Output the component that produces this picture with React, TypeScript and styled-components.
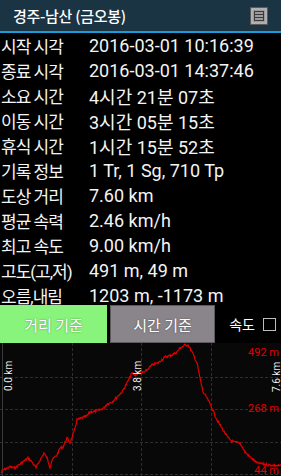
import React from 'react';
import styled, { createGlobalStyle } from 'styled-components';

const GlobalStyle = createGlobalStyle`
  html, body {
    margin: 0;
    padding: 0;
    background: #000;
  }
  body {
    font-family: Roboto, "Noto Sans CJK KR", sans-serif;
    color: #fff;
  }
`;

const rows: [string, string][] = [
  ['시작 시각', '2016-03-01 10:16:39'],
  ['종료 시각', '2016-03-01 14:37:46'],
  ['소요 시간', '4시간 21분 07초'],
  ['이동 시간', '3시간 05분 15초'],
  ['휴식 시간', '1시간 15분 52초'],
  ['기록 정보', '1 Tr, 1 Sg, 710 Tp'],
  ['도상 거리', '7.60 km'],
  ['평균 속력', '2.46 km/h'],
  ['최고 속도', '9.00 km/h'],
  ['고도(고,저)', '491 m, 49 m'],
  ['오름,내림', '1203 m, -1173 m'],
];

// rough shape of the elevation profile, jagged up by a fixed noise
const keyPoints: [number, number][] = [
  [1, 473], [3, 470], [10, 467], [15, 468], [20, 464], [28, 458], [32, 462],
  [36, 468], [40, 460], [44, 453], [47, 458], [50, 467], [52, 460], [57, 455],
  [60, 448], [63, 447], [67, 438], [70, 443], [74, 432], [77, 420], [82, 418],
  [87, 416], [90, 412], [97, 411], [104, 408], [107, 404], [112, 402], [117, 397],
  [122, 392], [127, 383], [130, 377], [132, 373], [135, 375], [138, 373],
  [140, 373], [145, 372], [152, 365], [158, 363], [165, 357], [172, 355],
  [177, 352], [180, 348], [185, 345], [188, 345], [192, 352], [197, 363],
  [200, 378], [203, 392], [207, 398], [212, 408], [217, 420], [223, 430],
  [228, 438], [233, 442], [240, 443], [245, 452], [250, 457], [257, 463],
  [263, 464], [270, 465], [281, 466],
];

const buildProfile = () => {
  const pts: string[] = [];
  let seed = 7;
  const rnd = () => {
    seed = (seed * 9301 + 49297) % 233280;
    return seed / 233280;
  };
  for (let i = 0; i < keyPoints.length - 1; i++) {
    const [x0, y0] = keyPoints[i];
    const [x1, y1] = keyPoints[i + 1];
    const steps = Math.max(1, Math.round((x1 - x0) * 1.5));
    for (let s = 0; s < steps; s++) {
      const t = s / steps;
      const x = x0 + (x1 - x0) * t;
      const y = y0 + (y1 - y0) * t + (rnd() - 0.5) * 2.4;
      pts.push(`${x.toFixed(1)},${(y - 343).toFixed(1)}`);
    }
  }
  const last = keyPoints[keyPoints.length - 1];
  pts.push(`${last[0]},${last[1] - 343}`);
  return pts.join(' ');
};

const profile = buildProfile();

const App = () => (
  <>
    <GlobalStyle />
    <Screen>
      <TitleBar>
        <Title>경주-남산 (금오봉)</Title>
        <MenuIcon>
          <svg width="18" height="18" viewBox="0 0 18 18">
            <rect x="0.5" y="0.5" width="17" height="17" fill="#9c9a9c" stroke="#5a5a5a" />
            <rect x="2" y="2" width="14" height="14" fill="none" stroke="#c4c2c4" strokeWidth="1" />
            <rect x="4.5" y="4.5" width="9" height="9" fill="none" stroke="#3a3a3a" strokeWidth="1" />
            <line x1="4.5" y1="7.5" x2="13.5" y2="7.5" stroke="#3a3a3a" />
            <line x1="4.5" y1="10.5" x2="13.5" y2="10.5" stroke="#3a3a3a" />
          </svg>
        </MenuIcon>
      </TitleBar>
      <Info>
        {rows.map(([label, value]) => (
          <Row key={label}>
            <Label>{label}</Label>
            <Value>{value}</Value>
          </Row>
        ))}
      </Info>
      <ButtonBar>
        <ModeButton $active>거리 기준</ModeButton>
        <ModeButton>시간 기준</ModeButton>
        <SpeedToggle>
          속도
          <CheckBox />
        </SpeedToggle>
      </ButtonBar>
      <Chart>
        <svg width="281" height="133" viewBox="0 0 281 133">
          <rect x="0" y="0" width="281" height="133" fill="#080808" />
          {[2, 72, 141, 211].map(x => (
            <line key={x} x1={x + 0.5} y1="0" x2={x + 0.5} y2="133" stroke="#2e2e2e" strokeDasharray="3 2" />
          ))}
          {[34, 66, 99, 131].map(y => (
            <line key={y} x1="0" y1={y + 0.5} x2="281" y2={y + 0.5} stroke="#2e2e2e" strokeDasharray="3 2" />
          ))}
          <line x1="2.5" y1="0" x2="2.5" y2="133" stroke="#3a3a3a" />
          <polyline points={profile} fill="none" stroke="#e00000" strokeWidth="1.2" />
          <g fill="#f0f0f0" fontFamily="Roboto, sans-serif" fontSize="10">
            <text transform="translate(12,48) rotate(-90)">0.0 km</text>
            <text transform="translate(141,48) rotate(-90)">3.8 km</text>
            <text transform="translate(280,49) rotate(-90)">7.6 km</text>
          </g>
          <g fill="#e00000" fontFamily="Roboto, sans-serif" fontSize="11" textAnchor="end">
            <text x="279" y="13">492 m</text>
            <text x="279" y="69">268 m</text>
            <text x="279" y="131">44 m</text>
          </g>
        </svg>
      </Chart>
    </Screen>
  </>
);

const Screen = styled.div`
  width: 281px;
  height: 476px;
  display: flex;
  flex-direction: column;
  background: #000;
  overflow: hidden;
`;

const TitleBar = styled.div`
  height: 31px;
  flex: none;
  display: flex;
  align-items: center;
  justify-content: space-between;
  padding: 0 13px 0 13px;
  background: #1a3444;
  border-bottom: 2px solid #1d9ad8;
`;

const Title = styled.div`
  font-family: "Noto Sans CJK KR", Roboto, sans-serif;
  font-size: 15px;
  font-weight: 500;
  color: #fff;
  letter-spacing: -0.3px;
`;

const MenuIcon = styled.div`
  width: 18px;
  height: 18px;
  display: flex;
  margin-top: 1px;
`;

const Info = styled.div`
  display: flex;
  flex-direction: column;
`;

const Row = styled.div`
  height: 25px;
  display: flex;
  align-items: center;
  color: #f4f4f4;
  white-space: nowrap;
`;

const Label = styled.div`
  width: 89px;
  flex: none;
  box-sizing: border-box;
  padding-left: 1px;
  font-family: Roboto, "Noto Sans CJK KR", sans-serif;
  font-size: 17px;
  letter-spacing: -1px;
`;

const Value = styled.div`
  flex: 1;
  font-family: Roboto, "Noto Sans CJK KR", sans-serif;
  font-size: 18px;
`;

const ButtonBar = styled.div`
  height: 38px;
  flex: none;
  display: flex;
  align-items: stretch;
  margin-top: -3px;
`;

const ModeButton = styled.div<{ $active?: boolean }>`
  width: ${p => (p.$active ? '107px' : '105px')};
  flex: none;
  margin-left: ${p => (p.$active ? '0' : '3px')};
  box-sizing: border-box;
  display: flex;
  align-items: center;
  justify-content: center;
  font-family: "Noto Sans CJK KR", sans-serif;
  font-size: 15px;
  color: #fff;
  text-shadow: 0 0 2px rgba(0, 0, 0, 0.45);
  background: ${p => (p.$active ? '#88f47c' : '#8a858a')};
  border: ${p => (p.$active ? 'none' : '1px solid #5e5a5e')};
`;

const SpeedToggle = styled.div`
  flex: 1;
  display: flex;
  align-items: center;
  justify-content: flex-end;
  gap: 8px;
  padding-right: 5px;
  font-family: "Noto Sans CJK KR", sans-serif;
  font-size: 14px;
  color: #fff;
`;

const CheckBox = styled.span`
  width: 11px;
  height: 11px;
  border: 1px solid #bdbdbd;
`;

const Chart = styled.div`
  flex: 1;
  display: flex;
`;

export default App;
